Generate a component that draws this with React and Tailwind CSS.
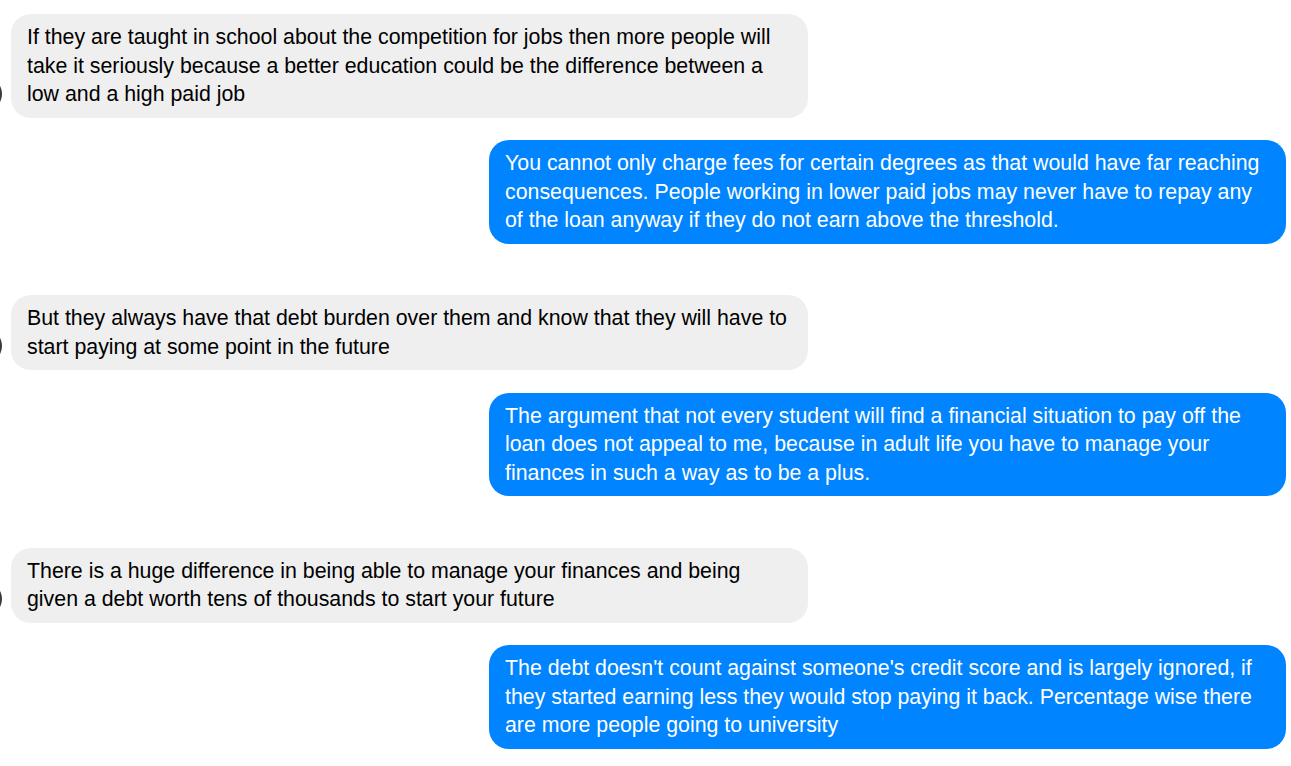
const messages = [
  [
    {
      me: false,
      text: "If they are taught in school about the competition for jobs then more people will take it seriously because a better education could be the difference between a low and a high paid job",
    },
    {
      me: true,
      text: "You cannot only charge fees for certain degrees as that would have far reaching consequences. People working in lower paid jobs may never have to repay any of the loan anyway if they do not earn above the threshold.",
    },
  ],
  [
    {
      me: false,
      text: "But they always have that debt burden over them and know that they will have to start paying at some point in the future",
    },
    {
      me: true,
      text: "The argument that not every student will find a financial situation to pay off the loan does not appeal to me, because in adult life you have to manage your finances in such a way as to be a plus.",
    },
  ],
  [
    {
      me: false,
      text: "There is a huge difference in being able to manage your finances and being given a debt worth tens of thousands to start your future",
    },
    {
      me: true,
      text: "The debt doesn't count against someone's credit score and is largely ignored, if they started earning less they would stop paying it back. Percentage wise there are more people going to university",
    },
  ],
];

const Bubble = ({ me, text }) => {
  if (me) {
    return (
      <div className="flex justify-end pr-[5px]">
        <div className="w-[797px] rounded-[20px] bg-[#0084ff] px-4 py-[9px] text-white">
          {text}
        </div>
      </div>
    );
  }
  return (
    <div className="flex items-end">
      {/* avatar, mostly cut off at the left edge */}
      <div className="w-[34px] h-[34px] -ml-[32px] mb-[7px] rounded-full bg-[#3a3a3a] shrink-0"></div>
      <div className="ml-[9px] w-[797px] rounded-[20px] bg-[#efefef] px-4 py-[9px] text-black">
        {text}
      </div>
    </div>
  );
};

const App = () => {
  return (
    <div
      className="w-[1291px] h-[766px] bg-white overflow-hidden pt-[14px] text-[21.33px] leading-[28.5px]"
      style={{ fontFamily: '"Liberation Sans", Arial, sans-serif' }}
    >
      <div className="flex flex-col gap-[51.5px]">
        {messages.map((pair, i) => (
          <div key={i} className="flex flex-col gap-[22.5px]">
            {pair.map((m, j) => (
              <Bubble key={j} me={m.me} text={m.text} />
            ))}
          </div>
        ))}
      </div>
    </div>
  );
};

export default App;
